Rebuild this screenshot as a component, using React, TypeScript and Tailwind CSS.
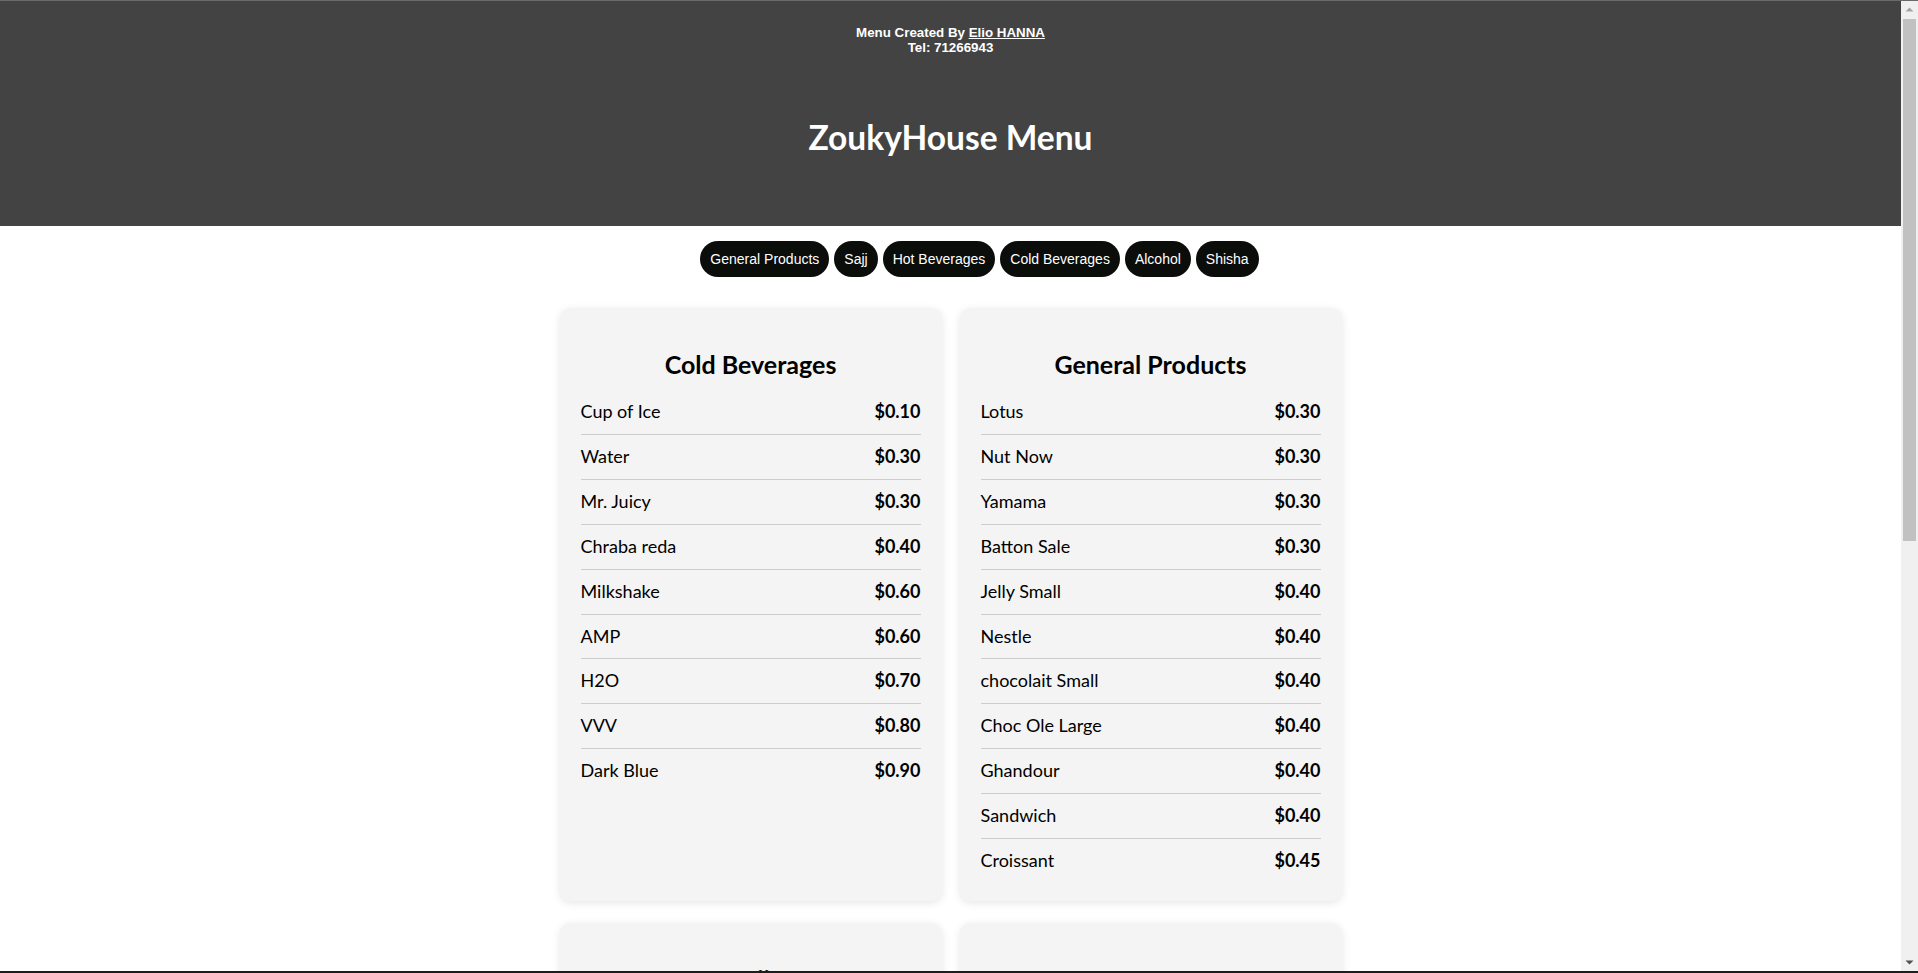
import React from "react";

type Item = { name: string; price: string };
type Cat = { title: string; items: Item[] };

const cats: Cat[] = [
  {
    title: "Cold Beverages",
    items: [
      { name: "Cup of Ice", price: "$0.10" },
      { name: "Water", price: "$0.30" },
      { name: "Mr. Juicy", price: "$0.30" },
      { name: "Chraba reda", price: "$0.40" },
      { name: "Milkshake", price: "$0.60" },
      { name: "AMP", price: "$0.60" },
      { name: "H2O", price: "$0.70" },
      { name: "VVV", price: "$0.80" },
      { name: "Dark Blue", price: "$0.90" },
    ],
  },
  {
    title: "General Products",
    items: [
      { name: "Lotus", price: "$0.30" },
      { name: "Nut Now", price: "$0.30" },
      { name: "Yamama", price: "$0.30" },
      { name: "Batton Sale", price: "$0.30" },
      { name: "Jelly Small", price: "$0.40" },
      { name: "Nestle", price: "$0.40" },
      { name: "chocolait Small", price: "$0.40" },
      { name: "Choc Ole Large", price: "$0.40" },
      { name: "Ghandour", price: "$0.40" },
      { name: "Sandwich", price: "$0.40" },
      { name: "Croissant", price: "$0.45" },
    ],
  },
  {
    title: "Sajj",
    items: [
      { name: "Zaatar", price: "$0.50" },
      { name: "Cheese", price: "$1.00" },
      { name: "Labneh", price: "$1.00" },
    ],
  },
  {
    title: "Hot Beverages",
    items: [
      { name: "Espresso", price: "$0.50" },
      { name: "Nescafe", price: "$0.50" },
      { name: "Tea", price: "$0.30" },
    ],
  },
];

const buttons = ["General Products", "Sajj", "Hot Beverages", "Cold Beverages", "Alcohol", "Shisha"];

function Card({ cat }: { cat: Cat }) {
  return (
    <div className="bg-[#f4f4f4] rounded-[10px] shadow-[0_2px_8px_rgba(0,0,0,0.1)] px-[21px] pt-[20px] pb-[18px]">
      <h2 className="text-center text-[25px] leading-[32px] font-bold text-black mt-[20px] mb-[10px]">
        {cat.title}
      </h2>
      <div className="flex flex-col">
        {cat.items.map((it, i) => (
          <div
            key={it.name}
            className={
              "flex justify-between items-center py-[10px] text-[18px] leading-[23.9px] text-black " +
              (i < cat.items.length - 1 ? "border-b border-[#cccccc]" : "")
            }
          >
            <span>{it.name}</span>
            <span className="font-bold">{it.price}</span>
          </div>
        ))}
      </div>
    </div>
  );
}

export default function App() {
  return (
    <div className="w-[1918px] h-[973px] flex flex-col overflow-hidden bg-white" style={{ fontFamily: '"Segoe UI", Lato, "Noto Sans", sans-serif' }}>
      <div className="h-[1px] bg-[#6a6a6a] shrink-0" />
      <div className="flex flex-1 min-h-0">
        <div className="flex-1 min-w-0 overflow-hidden">
          <header className="h-[225px] bg-[#434343] flex flex-col items-center text-white">
            <div className="pt-[24px] text-center text-[13.333px] leading-[15px] font-bold" style={{ fontFamily: '"Liberation Sans", Arial, sans-serif' }}>
              <div>
                Menu Created By <span className="underline">Elio HANNA</span>
              </div>
              <div>Tel: 71266943</div>
            </div>
            <h1 className="mt-[62px] text-[33.5px] leading-[40px] font-bold">ZoukyHouse Menu</h1>
          </header>
          <nav className="flex justify-center gap-[5px] mt-[15px] pl-[58px]">
            {buttons.map((b) => (
              <button
                key={b}
                className="h-[36px] px-[10px] rounded-full bg-[#0a0d0a] text-white text-[14px] leading-[16px]"
                style={{ fontFamily: '"Liberation Sans", Arial, sans-serif' }}
              >
                {b}
              </button>
            ))}
          </nav>
          <main className="grid grid-cols-[382px_382px] justify-center gap-x-[18px] gap-y-[22px] mt-[31px]">
            {cats.map((c) => (
              <Card key={c.title} cat={c} />
            ))}
          </main>
        </div>
        <div className="w-[17px] shrink-0 bg-[#f0f0f0] flex flex-col items-center">
          <svg width="17" height="17" viewBox="0 0 17 17" className="shrink-0">
            <path d="M4.5 10.5 L8.5 6.5 L12.5 10.5 Z" fill="#a3a3a3" />
          </svg>
          <div className="w-[13px] h-[522px] bg-[#c1c1c1] mt-[1px]" />
          <div className="flex-1" />
          <svg width="17" height="17" viewBox="0 0 17 17" className="shrink-0">
            <path d="M4.5 6.5 L8.5 10.5 L12.5 6.5 Z" fill="#505050" />
          </svg>
        </div>
      </div>
      <div className="h-[2px] bg-[#1e1e1e] shrink-0" />
    </div>
  );
}
